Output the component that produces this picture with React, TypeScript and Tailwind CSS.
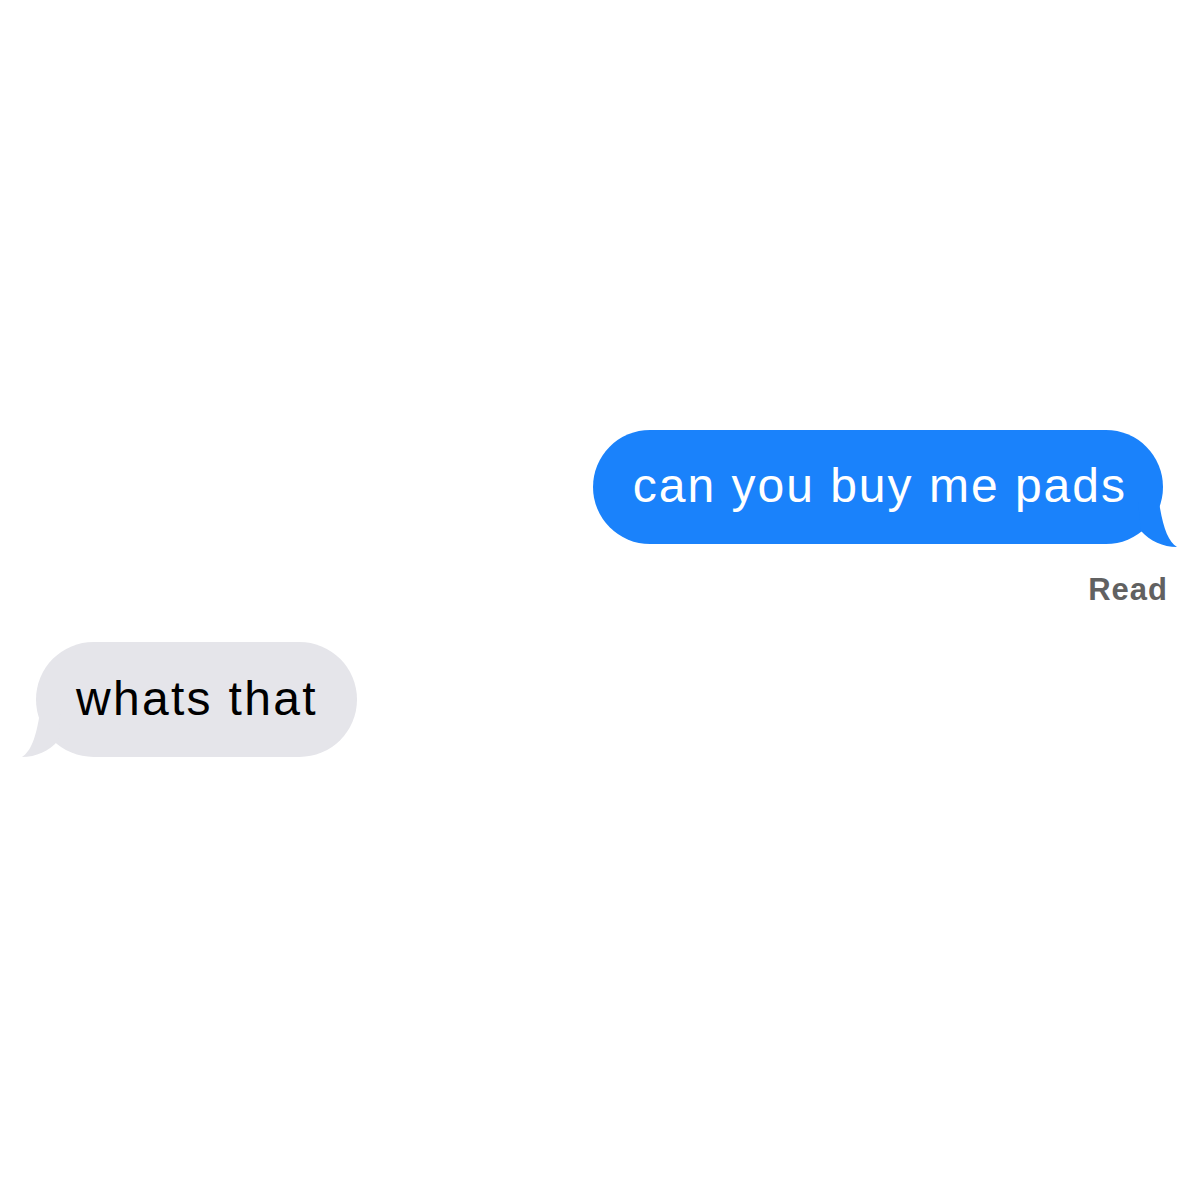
import React from "react";

const font = { fontFamily: '"Liberation Sans", Arial, sans-serif' };

function SentTail() {
  return (
    <svg
      className="absolute right-[-16px] bottom-[-4px]"
      width="56"
      height="56"
      viewBox="0 0 56 56"
    >
      <path
        d="M 18 39 C 27 49, 40 55, 54 55 C 45 49, 40 36, 36 10 L 15 10 Z"
        fill="#1a82fb"
      />
    </svg>
  );
}

function ReceivedTail() {
  return (
    <svg
      className="absolute left-[-16px] bottom-[-1px]"
      width="56"
      height="56"
      viewBox="0 0 56 56"
    >
      <path
        d="M 38 39 C 29 49, 16 55, 2 55 C 11 49, 16 36, 20 10 L 41 10 Z"
        fill="#e5e5ea"
      />
    </svg>
  );
}

export default function App() {
  return (
    <div
      className="w-[1200px] h-[1200px] bg-white flex flex-col pt-[430px]"
      style={font}
    >
      <div className="flex justify-end pr-[37px]">
        <div className="relative h-[114px] rounded-full bg-[#1a82fb] pl-10 pr-[36px] pb-[2px] flex items-center">
          <SentTail />
          <span className="relative text-white text-[48px] tracking-[2px] leading-none">
            can you buy me pads
          </span>
        </div>
      </div>
      <div className="flex justify-end pr-[32px] mt-[30px]">
        <span className="text-[31px] leading-[31px] font-bold tracking-[1px] text-[#616161]">
          Read
        </span>
      </div>
      <div className="flex justify-start pl-[36px] mt-[37px]">
        <div className="relative h-[115px] rounded-full bg-[#e5e5ea] pl-10 pr-[39px] pb-[2px] flex items-center">
          <ReceivedTail />
          <span className="relative text-black text-[48px] tracking-[2.3px] leading-none">
            whats that
          </span>
        </div>
      </div>
    </div>
  );
}
